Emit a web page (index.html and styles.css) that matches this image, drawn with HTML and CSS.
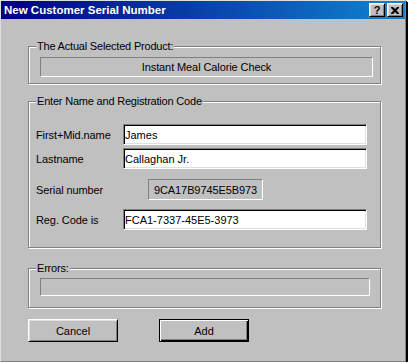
FILE: index.html
```html
<!DOCTYPE html>
<html lang="en">
<head>
  <meta charset="UTF-8">
  <title>New Customer Serial Number</title>
  <link rel="stylesheet" href="styles.css">
</head>
<body>
  <div class="window">
    <!-- title bar -->
    <div class="titlebar">
      <span class="title">New Customer Serial Number</span>
      <div class="title-btns">
        <span class="tbtn help">?</span>
        <span class="tbtn close">
          <svg width="8" height="7" viewBox="0 0 8 7">
            <path d="M0 0h2l2 2 2-2h2v1L5.5 3.5 8 6v1H6L4 5 2 7H0V6l2.5-2.5L0 1z" fill="#000"/>
          </svg>
        </span>
      </div>
    </div>

    <div class="content">
      <!-- product -->
      <div class="group g-product">
        <div class="legend">The Actual Selected Product:</div>
        <div class="sunken product">Instant Meal Calorie Check</div>
      </div>

      <!-- name + code -->
      <div class="group g-reg">
        <div class="legend">Enter Name and Registration Code</div>
        <div class="row r-first">
          <span class="lbl">First+Mid.name</span>
          <input class="field" type="text" value="James">
        </div>
        <div class="row r-last">
          <span class="lbl">Lastname</span>
          <input class="field" type="text" value="Callaghan Jr.">
        </div>
        <div class="row r-serial">
          <span class="lbl">Serial number</span>
          <div class="sunken serial">9CA17B9745E5B973</div>
        </div>
        <div class="row r-code">
          <span class="lbl">Reg. Code is</span>
          <input class="field" type="text" value="FCA1-7337-45E5-3973">
        </div>
      </div>

      <!-- errors -->
      <div class="group g-errors">
        <div class="legend">Errors:</div>
        <div class="sunken errors"></div>
      </div>

      <div class="buttons">
        <button class="btn">Cancel</button>
        <button class="btn default">Add</button>
      </div>
    </div>
  </div>
</body>
</html>
```

FILE: styles.css
```css
/* page */
html, body { margin: 0; padding: 0; background: #fff; }
body { font-family: "Liberation Sans", Arial, sans-serif; font-size: 11px; color: #000; }

/* window frame */
.window {
  box-sizing: border-box;
  width: 406px; height: 362px;
  background: #c0c0c0;
  border: 1px solid; border-color: #dfdfdf #808080 #808080 #dfdfdf;
  box-shadow: 1px 1px 0 #000, 2px 2px 0 #000;
}

/* title bar */
.titlebar {
  height: 18px;
  display: flex; align-items: center; justify-content: space-between;
  padding: 0 2px 0 3px;
  background: linear-gradient(to right, #000080, #1084d0);
}
.title { color: #fff; font-weight: bold; font-size: 11.5px; }
.title-btns { display: flex; gap: 2px; }
.tbtn {
  box-sizing: border-box;
  width: 16px; height: 14px;
  display: flex; align-items: center; justify-content: center;
  background: #c0c0c0;
  border: 1px solid; border-color: #fff #000 #000 #fff;
  box-shadow: inset 1px 1px #dfdfdf, inset -1px -1px #808080;
  font-weight: bold; font-size: 11px; line-height: 1;
}

/* content */
.content { padding: 27px 0 0 27px; }

.group {
  box-sizing: border-box;
  width: 353px;
  border: 1px solid #808080;
  box-shadow: inset 1px 1px #fff, 1px 1px 0 #fff;
}
.legend {
  width: fit-content;
  margin: -7px 0 0 7px;
  padding: 0 1px;
  line-height: 13px;
  background: #c0c0c0;
  letter-spacing: -0.2px;
}

.sunken {
  box-sizing: border-box;
  border: 1px solid; border-color: #808080 #fff #fff #808080;
  letter-spacing: -0.1px;
}

.g-product { padding-bottom: 6px; }
.product { width: 333px; height: 20px; margin: 4px 0 0 11px; display: flex; align-items: center; justify-content: center; }

.g-reg { margin-top: 17px; padding-bottom: 17px; }
.row { display: flex; align-items: center; height: 21px; padding-left: 7px; }
.lbl { width: 87px; letter-spacing: -0.1px; }
.r-first { margin-top: 16px; }
.r-last { margin-top: 3px; }
.r-serial { margin-top: 10px; }
.r-code { margin-top: 9px; }

.field {
  box-sizing: border-box;
  width: 244px; height: 21px;
  margin: 0; padding: 0 1px;
  background: #fff;
  border: 1px solid; border-color: #808080 #fff #fff #808080;
  box-shadow: inset 1px 1px #000, inset -1px -1px #dfdfdf;
  font-family: inherit; font-size: 11px; color: #000;
  outline: none;
}
.serial { width: 115px; height: 21px; margin-left: 25px; display: flex; align-items: center; justify-content: center; }

.g-errors { margin-top: 20px; padding-bottom: 11px; }
.errors { width: 330px; height: 18px; margin: 3px 0 0 11px; }

/* buttons */
.buttons { display: flex; gap: 41px; margin-top: 11px; }
.btn {
  box-sizing: border-box;
  width: 90px; height: 23px;
  margin: 0; padding: 0;
  background: #c0c0c0;
  border: 1px solid; border-color: #fff #000 #000 #fff;
  box-shadow: inset 1px 1px #dfdfdf, inset -1px -1px #808080;
  font-family: inherit; font-size: 11px; color: #000;
}
.btn.default {
  border: 1px solid #000;
  box-shadow: inset 1px 1px #fff, inset -1px -1px #000, inset -2px -2px #808080;
}
```
